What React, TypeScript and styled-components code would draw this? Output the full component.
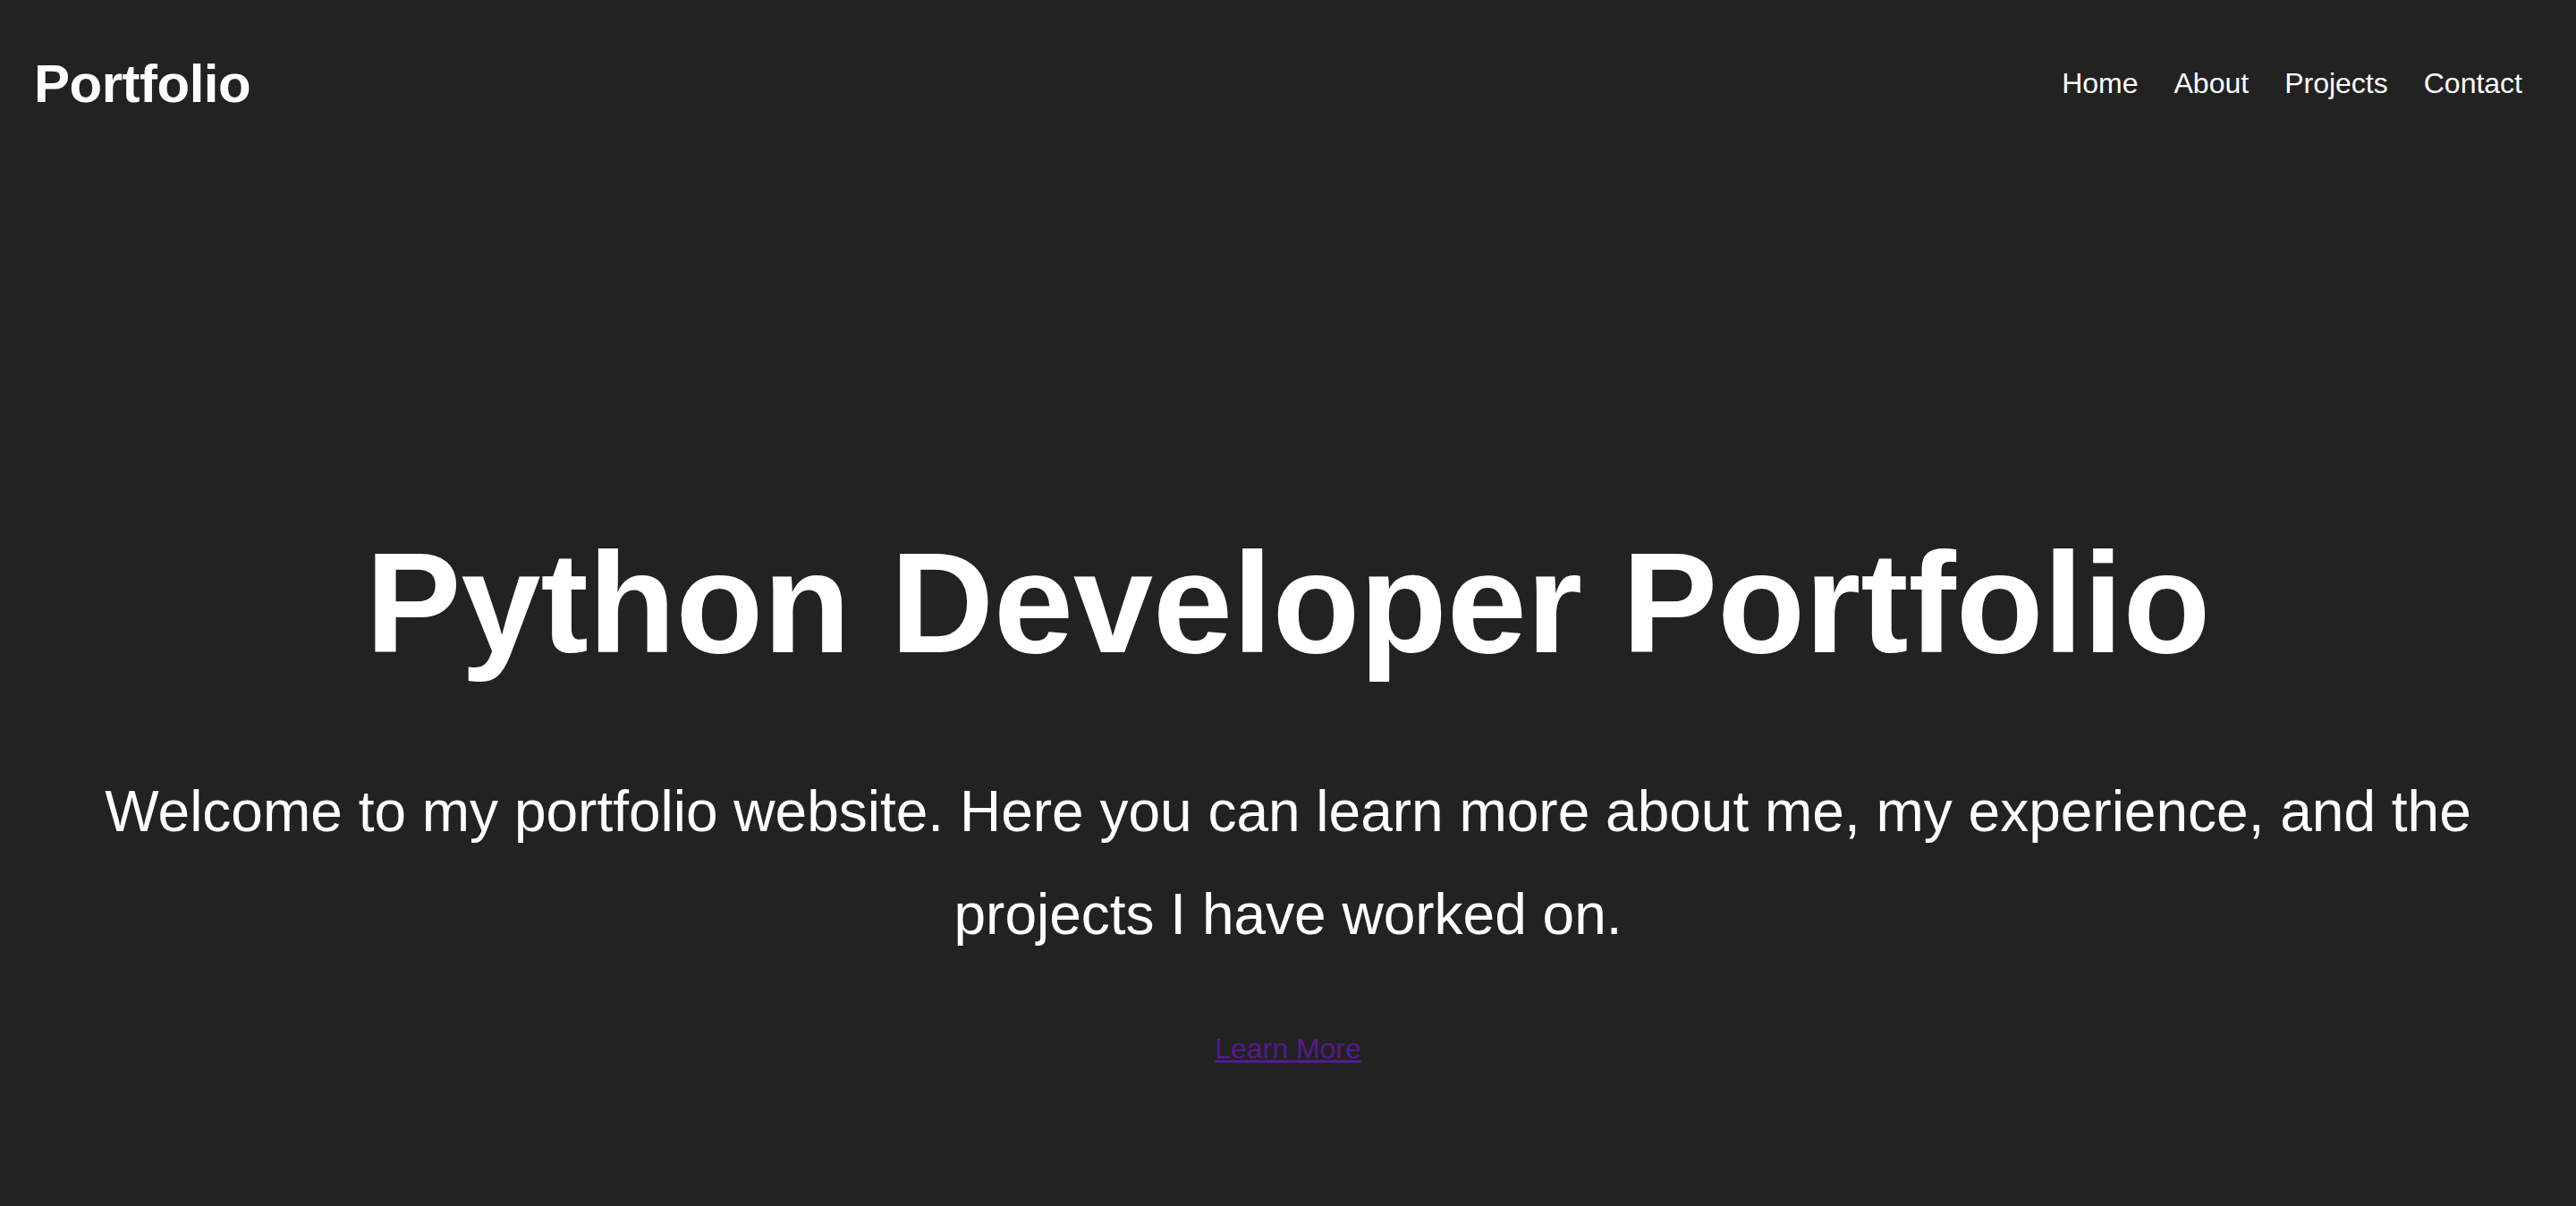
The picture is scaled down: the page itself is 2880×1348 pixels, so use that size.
import React from "react";
import styled, { createGlobalStyle } from "styled-components";

const GlobalStyle = createGlobalStyle`
  html, body {
    margin: 0;
    padding: 0;
    background: #222222;
  }
  body {
    font-family: "Liberation Sans", Arial, Helvetica, sans-serif;
    color: #ffffff;
    min-height: 1348px;
  }
`;

const navLinks = ["Home", "About", "Projects", "Contact"];

const App: React.FC = () => {
  return (
    <>
      <GlobalStyle />
      <Page>
        <Header>
          <Logo>Portfolio</Logo>
          <Nav>
            {navLinks.map((link) => (
              <NavLink key={link} href="#">
                {link}
              </NavLink>
            ))}
          </Nav>
        </Header>
        <Hero>
          <Title>Python Developer Portfolio</Title>
          <Intro>
            Welcome to my portfolio website. Here you can learn more about me,
            my experience, and the projects I have worked on.
          </Intro>
          <LearnMore href="#">Learn More</LearnMore>
        </Hero>
      </Page>
    </>
  );
};

export default App;

const Page = styled.div`
  width: 100%;
  min-height: 1348px;
  background: #222222;
`;

const Header = styled.header`
  display: flex;
  justify-content: space-between;
  align-items: center;
  height: 186px;
  padding: 0 40px 0 38px;
  box-sizing: border-box;
`;

const Logo = styled.h1`
  margin: 0;
  font-size: 60px;
  font-weight: 700;
  line-height: normal;
  letter-spacing: -0.5px;
  color: #ffffff;
`;

const Nav = styled.nav`
  display: flex;
  align-items: center;
`;

const NavLink = styled.a`
  margin: 0 20px;
  font-size: 32px;
  line-height: normal;
  color: #ffffff;
  text-decoration: none;
`;

const Hero = styled.section`
  display: flex;
  flex-direction: column;
  align-items: center;
  text-align: center;
  padding: 392px 40px 0;
`;

const Title = styled.h2`
  margin: 0;
  font-size: 160px;
  font-weight: 700;
  line-height: 192px;
  color: #ffffff;
`;

const Intro = styled.p`
  margin: 80px 0 0;
  font-size: 64px;
  line-height: 1.8;
  color: #ffffff;
`;

const LearnMore = styled.a`
  margin-top: 74px;
  font-size: 32px;
  line-height: normal;
  color: #551a8b;
  text-decoration: underline;
`;
